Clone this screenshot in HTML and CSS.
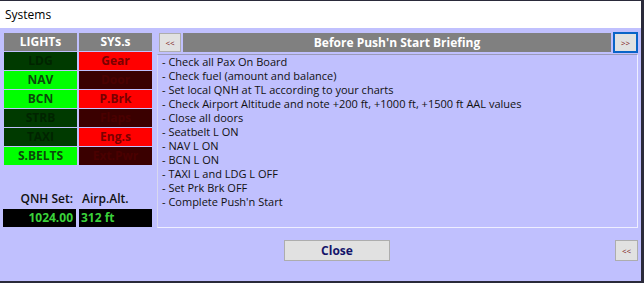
FILE: index.html
```html
<!DOCTYPE html>
<html>
<head>
<meta charset="utf-8">
<link rel="stylesheet" href="styles.css">
</head>
<body>
<div class="window">
  <div class="titlebar">Systems</div>
  <div class="client">
    <div class="main">
      <div class="left">
        <div class="grid">
          <div class="hdr">LIGHTs</div>
          <div class="hdr">SYS.s</div>
          <div class="cell g-off">LDG</div>
          <div class="cell r-on">Gear</div>
          <div class="cell g-on">NAV</div>
          <div class="cell r-off">Door</div>
          <div class="cell g-on">BCN</div>
          <div class="cell r-on">P.Brk</div>
          <div class="cell g-off">STRB</div>
          <div class="cell r-off">Flaps</div>
          <div class="cell g-off">TAXI</div>
          <div class="cell r-on">Eng.s</div>
          <div class="cell g-on">S.BELTS</div>
          <div class="cell r-off">Ext.Pwr</div>
        </div>
        <div class="readouts">
          <div class="lbl lbl-r">QNH Set:</div>
          <div class="lbl lbl-l">Airp.Alt.</div>
          <div class="val val-r">1024.00</div>
          <div class="val val-l">312 ft</div>
        </div>
      </div>
      <div class="right">
        <div class="topbar">
          <button class="sbtn">&lt;&lt;</button>
          <div class="title">Before Push'n Start Briefing</div>
          <button class="sbtn focus">&gt;&gt;</button>
        </div>
        <div class="list">
          <div>- Check all Pax On Board</div>
          <div>- Check fuel (amount and balance)</div>
          <div>- Set local QNH at TL according to your charts</div>
          <div>- Check Airport Altitude and note +200 ft, +1000 ft, +1500 ft AAL values</div>
          <div>- Close all doors</div>
          <div>- Seatbelt L ON</div>
          <div>- NAV L ON</div>
          <div>- BCN L ON</div>
          <div>- TAXI L and LDG L OFF</div>
          <div>- Set Prk Brk OFF</div>
          <div>- Complete Push'n Start</div>
        </div>
      </div>
    </div>
    <div class="bottom">
      <button class="close">Close</button>
      <button class="sbtn back">&lt;&lt;</button>
    </div>
  </div>
</div>
</body>
</html>
```
FILE: styles.css
```css
html, body {
  margin: 0;
  padding: 0;
  width: 644px;
  height: 283px;
  overflow: hidden;
  background: #2a2a3a;
  font-family: "Open Sans", "Noto Sans", sans-serif;
}
.window {
  width: 641px;
  height: 280px;
  margin-top: 1px;
  background: #c0c0fe;
  display: flex;
  flex-direction: column;
}
.titlebar {
  height: 27px;
  background: #ffffff;
  font-size: 12px;
  color: #000;
  padding-left: 5px;
  line-height: 27px;
  flex: none;
}
.client {
  flex: 1;
  display: flex;
  flex-direction: column;
  padding: 5px 3px 0 3px;
}
.main {
  display: flex;
  gap: 5px;
}
.left {
  width: 149px;
  display: flex;
  flex-direction: column;
}
.grid {
  display: grid;
  grid-template-columns: 73px 73px;
  grid-auto-rows: 18px;
  column-gap: 2px;
  row-gap: 1px;
  padding-left: 1px;
}
.hdr {
  background: #808080;
  color: #fff;
  font-weight: 700;
  font-size: 12px;
  text-align: center;
  line-height: 18px;
}
.cell {
  font-weight: 700;
  font-size: 12px;
  text-align: center;
  line-height: 18px;
}
.g-on { background: #00ff00; color: #0b4a0b; }
.g-off { background: #003a00; color: #002400; }
.r-on { background: #ff0000; color: #7a0000; }
.r-off { background: #3a0000; color: #4a0000; }
.readouts {
  margin-top: 26px;
  display: grid;
  grid-template-columns: 73px 73px;
  column-gap: 3px;
}
.lbl {
  font-size: 12px;
  font-weight: 600;
  color: #111;
  line-height: 16px;
  height: 18px;
}
.lbl-r { text-align: right; padding-right: 3px; }
.lbl-l { padding-left: 3px; }
.val {
  background: #000;
  color: #3ad23a;
  font-weight: 700;
  font-size: 12px;
  line-height: 18px;
  height: 18px;
}
.val-r { text-align: right; padding-right: 3px; }
.val-l { padding-left: 2px; }
.right {
  flex: 1;
  display: flex;
  flex-direction: column;
}
.topbar {
  display: flex;
  align-items: center;
  gap: 2px;
  height: 19px;
  padding-left: 2px;
}
.sbtn {
  width: 22px;
  height: 19px;
  padding: 0;
  margin: 0;
  background: #e1e1e1;
  border: 1px solid #adadad;
  color: #7a1010;
  font-family: "Open Sans", sans-serif;
  font-size: 8px;
  line-height: 15px;
  box-sizing: border-box;
}
.sbtn.focus {
  width: 25px;
  height: 21px;
  border: 2px solid #0a64c8;
}
.title {
  flex: 1;
  height: 19px;
  background: #808080;
  color: #fff;
  font-weight: 700;
  font-size: 12px;
  text-align: center;
  line-height: 19px;
}
.list {
  margin-top: 2px;
  height: 172px;
  border: 1px solid #eeeeff;
  border-top-color: #9a9ab8;
  border-left-color: #d8d8f0;
  padding: 0 4px;
  font-size: 11px;
  line-height: 14px;
  color: #111;
}
.bottom {
  display: flex;
  align-items: center;
  justify-content: space-between;
  margin-top: 12px;
  padding-left: 281px;
  padding-right: 0;
}
.close {
  width: 106px;
  height: 21px;
  background: #e1e1e1;
  border: 1px solid #adadad;
  color: #14146a;
  font-family: "Open Sans", sans-serif;
  font-weight: 700;
  font-size: 12px;
  padding: 0;
}
.sbtn.back {
  width: 23px;
  height: 21px;
}
```
